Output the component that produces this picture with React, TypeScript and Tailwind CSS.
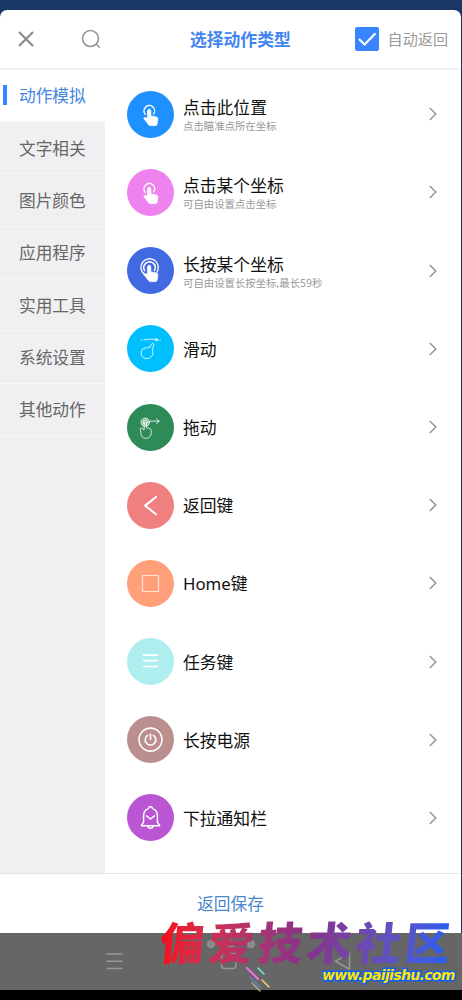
import type { ReactNode } from "react";
import clsx from "clsx";

interface ActionItem {
  title: string;
  description?: string;
  color: string;
  icon: ReactNode;
}

const HAND_PATH =
  "M20.5 19.8c0-2.2 3.3-2.2 3.3 0v5.1l5.3 1c1.3.2 1.8.9 1.7 2.1l-.7 5c-.1 1-.8 1.6-1.8 1.6h-4.8c-.8 0-1.3-.3-1.8-.9l-4.9-6.2c.7-1.2 2-1.3 3.7 0Z";

const TapIcon = ({ double = false }: { double?: boolean }) => (
  <>
    <path d={HAND_PATH} fill="white" />
    {double ? (
      <>
        <path d="M17.7 23.7a5.7 5.7 0 1 1 9.7-.2" strokeWidth="1.5" />
        <path d="M17.3 27.3a8.7 8.7 0 1 1 12.6-2.2" strokeWidth="1.4" />
      </>
    ) : (
      <path d="M18.3 23.3a5.3 5.3 0 1 1 8.4-.5" strokeWidth="1.4" />
    )}
  </>
);

const SwipeIcon = () => (
  <>
    <path d="M17 15c4.5-1 9-1.1 13.5-.2" />
    <path d="m28.7 13.2 2.6 1.8-2.9.7M14.2 15.2h.6M33 15.2h.4" />
    <path d="m22.8 22.4 1.7-3.3c.7-1.3 2.5-.8 2.2.7l-1.3 5.2c.9 1.9.7 4.3-.4 5.9-1.4 2-3.5 2.9-5.9 2.6-3.3-.3-5.1-2.4-4.9-5.3.1-1.7.2-2.9.9-4 .7-.9 1.7-.6 2 .2.1-2 2-2.7 2.8-1 .5-1.7 2.3-1.8 2.9-1Z" />
  </>
);

const DragIcon = () => (
  <>
    <circle cx="18.3" cy="18.3" r="4.2" fill="rgba(255,255,255,.35)" />
    <circle cx="18.3" cy="18.3" r="2.2" />
    <path d="M23 17.2h9m-2.5-2.3 2.8 2.3-2.8 2.3" />
    <path d="M17.1 19v7l-1.7-1.6c-1.5-1.1-2.8.2-2 1.7.7 1.2.3 2.5.6 4 .6 2.6 2.5 4.5 5.1 4.3 3.6-.3 5.2-2.8 5.2-6.2 0-2.3-.3-3.5-1.7-3.4-.6-1.4-1.8-1.3-2.2-.4l-1-.6V19c0-1.4-2.3-1.4-2.3 0Z" />
  </>
);

const categories = [
  "动作模拟",
  "文字相关",
  "图片颜色",
  "应用程序",
  "实用工具",
  "系统设置",
  "其他动作",
];

const actions: ActionItem[] = [
  {
    title: "点击此位置",
    description: "点击瞄准点所在坐标",
    color: "bg-[#1e90ff]",
    icon: <TapIcon />,
  },
  {
    title: "点击某个坐标",
    description: "可自由设置点击坐标",
    color: "bg-[#ee82ee]",
    icon: <TapIcon />,
  },
  {
    title: "长按某个坐标",
    description: "可自由设置长按坐标,最长59秒",
    color: "bg-[#4169e1]",
    icon: <TapIcon double />,
  },
  { title: "滑动", color: "bg-[#00bfff]", icon: <SwipeIcon /> },
  { title: "拖动", color: "bg-[#2e8b57]", icon: <DragIcon /> },
  {
    title: "返回键",
    color: "bg-[#f08080]",
    icon: <path d="m29 15-10.9 8.6L29 32.2" strokeWidth="2" />,
  },
  {
    title: "Home键",
    color: "bg-[#ffa07a]",
    icon: (
      <rect
        x="15.5"
        y="15.5"
        width="16"
        height="16"
        strokeWidth="1.2"
        stroke="#ffe4d6"
      />
    ),
  },
  {
    title: "任务键",
    color: "bg-[#afeeee]",
    icon: <path d="M16.8 17.2h13.7M16.8 22.7h13.7M16.8 28.5h13.7" strokeWidth="1.7" />,
  },
  {
    title: "长按电源",
    color: "bg-[#bc8f8f]",
    icon: (
      <>
        <circle cx="23.5" cy="23.6" r="11.5" strokeWidth="1.6" />
        <path d="M23.5 18v5.5M20.6 19.3a5.3 5.3 0 1 0 5.8 0" strokeWidth="1.6" />
      </>
    ),
  },
  {
    title: "下拉通知栏",
    color: "bg-[#ba55d3]",
    icon: (
      <>
        <path
          d="M14.3 31.7h18.4l-2.3-3.6v-6.3c0-3.8-1.8-6.2-4.7-7.2-.4-1.4-1.2-2.1-2.2-2.1s-1.8.7-2.2 2.1c-2.9 1-4.7 3.4-4.7 7.2v6.3l-2.3 3.6ZM21 32.6c.4 2.3 4.6 2.3 5 0"
          strokeWidth="1.5"
        />
        <path d="m19.5 21.8 4 3.2 4-3.2" strokeWidth="1.5" />
      </>
    ),
  },
];

const Header = () => (
  <header className="flex h-[60px] shrink-0 items-center border-b-2 border-[#f2f2f4] pl-[18px] pr-[13px]">
    <svg
      className="size-4 shrink-0"
      viewBox="0 0 16 16"
      fill="none"
      stroke="#8c8c8c"
      strokeWidth="2.2"
    >
      <path d="m1 1 14 14M15 1 1 15" />
    </svg>
    <svg
      className="ml-[47px] size-5 shrink-0"
      viewBox="0 0 20 20"
      fill="none"
      stroke="#969696"
      strokeWidth="1.6"
    >
      <circle cx="9.5" cy="9.5" r="8" />
      <path d="m14.8 14.8 4 4" />
    </svg>
    <h1 className="ml-[89px] whitespace-nowrap pt-[2px] text-[16.8px] font-bold leading-6 text-[#4285f0]">
      选择动作类型
    </h1>
    <div className="ml-auto flex items-center">
      <span className="flex size-6 items-center justify-center rounded-[2px] bg-[#3985ff]">
        <svg
          className="size-6"
          viewBox="0 0 24 24"
          fill="none"
          stroke="white"
          strokeWidth="2.2"
        >
          <path d="m4 12 5.6 5.5L20.5 6.3" />
        </svg>
      </span>
      <span className="ml-[9px] whitespace-nowrap pt-px text-[15.1px] leading-6 text-[#999]">
        自动返回
      </span>
    </div>
  </header>
);

const Sidebar = () => (
  <nav className="flex w-[104.5px] shrink-0 flex-col bg-[#f0f0f2]">
    {categories.map((name, index) => (
      <div
        key={name}
        className={clsx(
          "flex h-[52.35px] shrink-0 items-center border-b border-[#f8f8f9] text-[16.7px]",
          index === 0 ? "bg-white text-[#4285e0]" : "text-[#666]",
        )}
      >
        <span
          className={clsx(
            "ml-[2.5px] h-5 w-1 shrink-0",
            index === 0 && "bg-[#3985ff]",
          )}
        />
        <span className="ml-[12.5px] pt-[2px] leading-6">{name}</span>
      </div>
    ))}
  </nav>
);

const ActionRow = ({ title, description, color, icon }: ActionItem) => (
  <div className="flex h-[78.2px] items-center pl-[22px] pr-6">
    <div className={clsx("size-[47px] shrink-0 rounded-full", color)}>
      <svg
        className="size-[47px]"
        viewBox="0 0 47 47"
        fill="none"
        stroke="white"
        strokeLinecap="round"
        strokeLinejoin="round"
        strokeWidth="0.8"
      >
        {icon}
      </svg>
    </div>
    <div
      className={clsx(
        "ml-[9.5px] flex flex-1 flex-col whitespace-nowrap",
        description ? "pt-[5px]" : "pt-[2px]",
      )}
    >
      <span className="text-[16.8px] leading-5 text-[#111]">{title}</span>
      {description && (
        <span className="text-[10.4px] leading-[17px] text-[#999]">
          {description}
        </span>
      )}
    </div>
    <svg
      className="h-3.5 w-2 shrink-0"
      viewBox="0 0 8 14"
      fill="none"
      stroke="#999"
      strokeWidth="1.6"
    >
      <path d="m.8 1 6 6-6 6" />
    </svg>
  </div>
);

const SystemBar = () => (
  <div className="flex h-[57px] shrink-0 items-center bg-[#666]">
    <svg
      className="h-[57px] w-full"
      viewBox="0 0 462 57"
      fill="none"
      stroke="#989898"
      strokeWidth="1.5"
    >
      <path d="M106.5 21h16M106.5 28.2h16M106.5 35.4h16" />
      <rect x="221.5" y="20" width="14.5" height="15.5" rx="3" />
      <path d="M335.5 28.2 349.5 20.3v15.9Z" />
      <g fill="#8b8b8b" stroke="none">
        <circle cx="211" cy="11" r="4.3" />
        <circle cx="231" cy="11" r="4.3" />
        <circle cx="251" cy="11" r="4.3" />
      </g>
    </svg>
  </div>
);

const Watermark = () => (
  <>
    <div className="absolute left-[160px] top-[915px] -skew-x-6 whitespace-nowrap bg-linear-to-r from-[#f70810] via-[#86308a] to-[#1860f0] bg-clip-text text-[45px] font-black leading-[56px] tracking-[4px] text-transparent">
      偏爱技术社区
    </div>
    <svg
      className="absolute left-[245px] top-[964px] h-7 w-7"
      viewBox="0 0 28 28"
      strokeWidth="1.5"
      strokeLinecap="round"
    >
      <path d="m2 4 11 11" stroke="#ef70df" strokeWidth="2" />
      <path d="m13 4 6 6" stroke="#75ecdc" />
      <path d="m5 13 10 10" stroke="#6083bd" />
      <path d="m17 16 7 7" stroke="#f4cf73" />
      <path d="m7 19 8 8" stroke="#b7aa84" />
    </svg>
    <div className="absolute left-[322px] top-[965px] whitespace-nowrap font-['DejaVu_Sans',sans-serif] text-[14px] font-bold italic leading-5 tracking-[-0.65px] text-[#ffe600] [paint-order:stroke_fill] [-webkit-text-stroke:3px_#1260ed]">
      www.paijishu.com
    </div>
  </>
);

export default function App() {
  return (
    <div className="relative flex h-[1000px] w-[462px] flex-col overflow-hidden bg-[#183767] font-['Noto_Sans','Noto_Sans_CJK_SC',sans-serif]">
      <div className="h-[9.5px] shrink-0" />
      <main className="mr-px flex h-[923.5px] shrink-0 flex-col overflow-hidden rounded-t-[7px] bg-white">
        <Header />
        <div className="flex min-h-0 flex-1">
          <Sidebar />
          <section className="flex-1 pt-[5.7px]">
            {actions.map((action) => (
              <ActionRow key={action.title} {...action} />
            ))}
          </section>
        </div>
        <footer className="flex h-[60px] shrink-0 items-center justify-center border-t border-[#e5e5e5] pt-px text-[16.7px] text-[#4b87cc]">
          返回保存
        </footer>
      </main>
      <SystemBar />
      <div className="h-2.5 shrink-0 bg-black" />
      <Watermark />
    </div>
  );
}
